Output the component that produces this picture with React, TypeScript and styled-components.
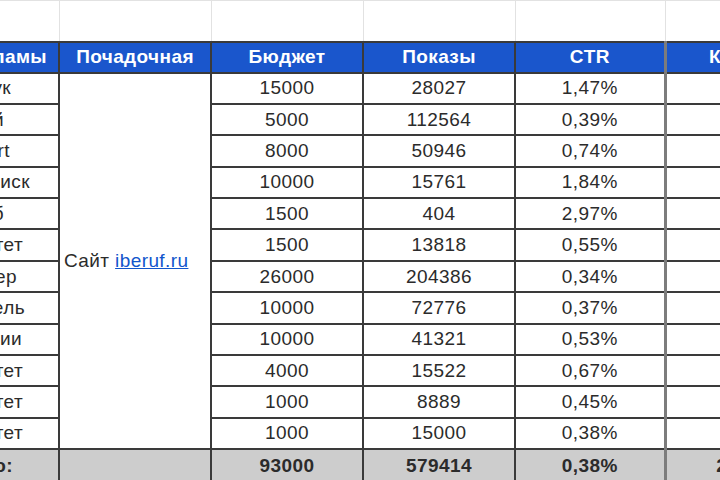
import styled, { createGlobalStyle } from 'styled-components';

const GlobalStyle = createGlobalStyle`
    html, body {
        margin: 0;
        padding: 0;
        overflow: hidden;
        background: #ffffff;
    }

    body {
        font-family: "Liberation Sans", Arial, sans-serif;
    }
`;

interface IChannelRow {
    Name: string;
    Inset: number;
    Budget: number;
    Shows: number;
    Ctr: string;
    Clicks: number;
}

const rows: IChannelRow[] = [
    { Name: 'Фейсбук', Inset: 42, Budget: 15000, Shows: 28027, Ctr: '1,47%', Clicks: 412 },
    { Name: 'Медийный', Inset: 49, Budget: 5000, Shows: 112564, Ctr: '0,39%', Clicks: 439 },
    { Name: 'Google Smart', Inset: 43, Budget: 8000, Shows: 50946, Ctr: '0,74%', Clicks: 377 },
    { Name: 'Google поиск', Inset: 23, Budget: 10000, Shows: 15761, Ctr: '1,84%', Clicks: 290 },
    { Name: 'Ютуб', Inset: 49, Budget: 1500, Shows: 404, Ctr: '2,97%', Clicks: 12 },
    { Name: 'Авито Приоритет', Inset: 30, Budget: 1500, Shows: 13818, Ctr: '0,55%', Clicks: 76 },
    { Name: 'Яндекс Баннер', Inset: 36, Budget: 26000, Shows: 204386, Ctr: '0,34%', Clicks: 695 },
    { Name: 'Путеводитель', Inset: 28, Budget: 10000, Shows: 72776, Ctr: '0,37%', Clicks: 269 },
    { Name: 'Смарт-кампании', Inset: 31, Budget: 10000, Shows: 41321, Ctr: '0,53%', Clicks: 219 },
    { Name: 'Юла Приоритет', Inset: 30, Budget: 4000, Shows: 15522, Ctr: '0,67%', Clicks: 104 },
    { Name: 'Avito Приоритет', Inset: 30, Budget: 1000, Shows: 8889, Ctr: '0,45%', Clicks: 40 },
    { Name: 'Пакет Приоритет', Inset: 30, Budget: 1000, Shows: 15000, Ctr: '0,38%', Clicks: 57 },
];

const columns = [152, 152, 152, 152, 150, 146];

const App = () => {
    return (
        <>
            <GlobalStyle />
            <Sheet>
                <colgroup>
                    { columns.map((w, i) => <col key={ i } style={ { width: w } } />) }
                </colgroup>
                <tbody>
                    <BlankRow>
                        { columns.map((_, i) => <BlankCell key={ i } />) }
                    </BlankRow>

                    <HeadRow>
                        <HeadCell><Tail $inset={ 6 }>Источник рекламы</Tail></HeadCell>
                        <HeadCell>Почадочная</HeadCell>
                        <HeadCell>Бюджет</HeadCell>
                        <HeadCell>Показы</HeadCell>
                        <HeadCell>CTR</HeadCell>
                        <HeadCell $split>Клики</HeadCell>
                    </HeadRow>

                    { rows.map((row, i) => (
                        <DataRow key={ i }>
                            <Cell><Tail $inset={ row.Inset }>{ row.Name }</Tail></Cell>
                            { i === 0 && (
                                <LandingCell rowSpan={ rows.length }>
                                    Сайт <SiteLink href="#">iberuf.ru</SiteLink>
                                </LandingCell>
                            ) }
                            <Cell>{ row.Budget }</Cell>
                            <Cell>{ row.Shows }</Cell>
                            <Cell>{ row.Ctr }</Cell>
                            <Cell $split>{ row.Clicks }</Cell>
                        </DataRow>
                    )) }

                    <TotalRow>
                        <TotalCell><Tail $inset={ 40 }>Итого:</Tail></TotalCell>
                        <TotalCell />
                        <TotalCell>93000</TotalCell>
                        <TotalCell>579414</TotalCell>
                        <TotalCell>0,38%</TotalCell>
                        <TotalCell $split>2990</TotalCell>
                    </TotalRow>
                </tbody>
            </Sheet>
        </>
    );
};

const Sheet = styled.table`
    margin-left: -94px;
    width: 904px;
    table-layout: fixed;
    border-collapse: collapse;
    font-size: 19px;
    letter-spacing: 0.4px;
    color: #2b2b2b;
`;

const BlankRow = styled.tr`
    height: 41px;
`;

const BlankCell = styled.td`
    padding: 0;
    border: 1px solid #e2e2e2;
    border-bottom: none;
`;

const HeadRow = styled.tr`
    height: 31px;
`;

const Cell = styled.td<{ $split?: boolean }>`
    padding: 0 5px;
    text-align: center;
    vertical-align: middle;
    white-space: nowrap;
    overflow: hidden;
    border: 2px solid #3a3a3a;
    border-left: ${ ({ $split }) => $split ? '3px solid #7c7c7c' : '2px solid #3a3a3a' };
`;

const HeadCell = styled(Cell)`
    background: #1a56cc;
    color: #ffffff;
    font-weight: bold;
`;

const DataRow = styled.tr`
    height: 31.4px;
`;

const Tail = styled.div<{ $inset: number }>`
    display: flex;
    justify-content: flex-end;
    padding-right: ${ ({ $inset }) => $inset }px;
`;

const LandingCell = styled(Cell)`
    text-align: left;
    padding-left: 4px;
`;

const SiteLink = styled.a`
    color: #1155cc;
    text-decoration: underline;
`;

const TotalRow = styled.tr`
    height: 34px;
`;

const TotalCell = styled(Cell)`
    background: #cdcdcd;
    font-weight: bold;
`;

export default App;
